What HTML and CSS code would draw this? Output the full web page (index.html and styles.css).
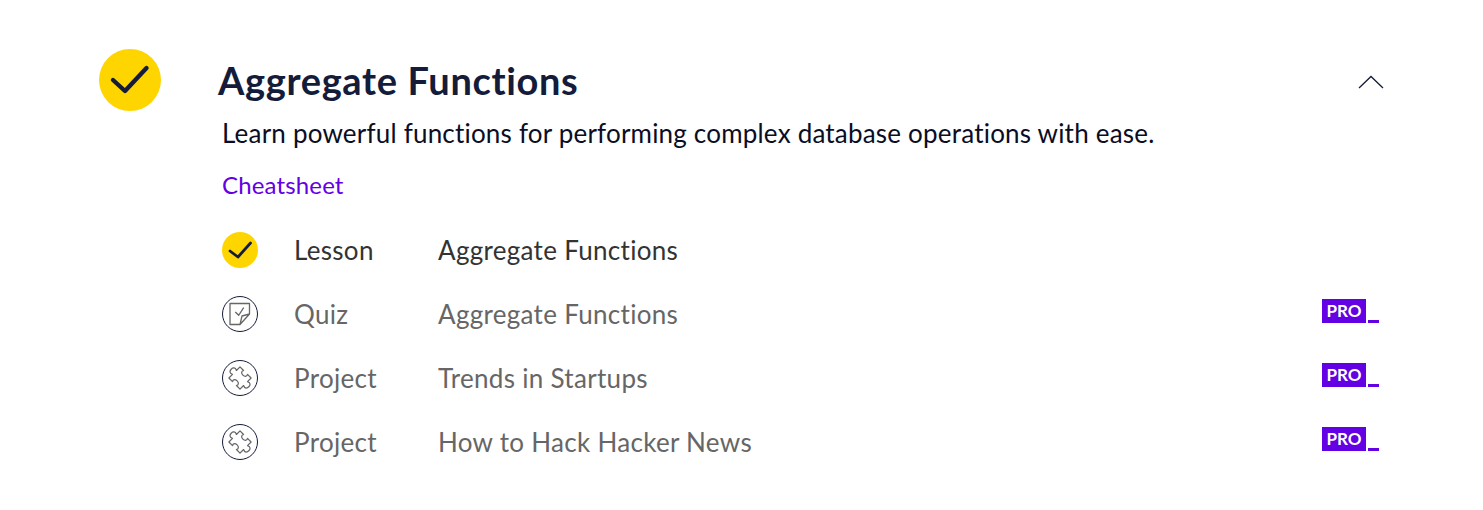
FILE: index.html
```html
<!DOCTYPE html>
<html lang="en">
<head>
    <meta charset="UTF-8">
    <title>Aggregate Functions</title>
    <link rel="stylesheet" href="styles.css">
</head>
<body>
    <svg class="defs" width="0" height="0">
        <defs>
            <path id="puzzle" d="M-7 -7 H-2.5 C-5.5 -12.5 5.5 -12.5 2.5 -7 H7 V-2.5 C2.5 -5 2.5 5 7 2.5 V7 H2.5 C5.5 12.5 -5.5 12.5 -2.5 7 H-7 V2.5 C-2.5 5 -2.5 -5 -7 -2.5 Z"/>
        </defs>
    </svg>
    <div class="module">
        <svg class="module-icon" viewBox="0 0 62 62">
            <circle cx="31" cy="31" r="31" fill="#ffd500"/>
            <path d="M14 31 L26 42 L47.5 19" fill="none" stroke="#141c3a" stroke-width="4.4" stroke-linecap="round" stroke-linejoin="round"/>
        </svg>
        <div class="module-body">
            <div class="module-head">
                <h2 class="title">Aggregate Functions</h2>
                <svg class="chevron" viewBox="0 0 26 14">
                    <path d="M1 13 L13 1.5 L25 13" fill="none" stroke="#141c3a" stroke-width="1.3"/>
                </svg>
            </div>
            <div class="module-content">
                <p class="desc">Learn powerful functions for performing complex database operations with ease.</p>
                <a class="sheet" href="#">Cheatsheet</a>
                <ul class="items">
                    <li class="item done">
                        <svg class="item-icon" viewBox="0 0 36 36">
                            <circle cx="18" cy="18" r="18" fill="#ffd500"/>
                            <path d="M8 19 L16 25 L28.5 11" fill="none" stroke="#141c3a" stroke-width="2.8" stroke-linecap="round" stroke-linejoin="round"/>
                        </svg>
                        <span class="kind">Lesson</span>
                        <span class="name">Aggregate Functions</span>
                    </li>
                    <li class="item">
                        <svg class="item-icon" viewBox="0 0 36 36">
                            <circle cx="18" cy="18" r="17.5" fill="none" stroke="#141c3a"/>
                            <path d="M8 7.5 H27.5 V18 L18 28.5 H8 Z M18 28.5 L20 20 L27.5 18" fill="none" stroke="#666" stroke-width="1.3" stroke-linejoin="round"/>
                            <path d="M13.3 16 L16.7 19.3 L21.7 11.7" fill="none" stroke="#666" stroke-width="1.3"/>
                        </svg>
                        <span class="kind">Quiz</span>
                        <span class="name">Aggregate Functions</span>
                        <span class="pro"><span class="pro-box">PRO</span><span class="pro-line"></span></span>
                    </li>
                    <li class="item">
                        <svg class="item-icon" viewBox="0 0 36 36">
                            <circle cx="18" cy="18" r="17.5" fill="none" stroke="#141c3a"/>
                            <use href="#puzzle" transform="translate(18 18) rotate(-45) scale(1.12)" fill="none" stroke="#666" stroke-width="1.1" stroke-linejoin="round"/>
                        </svg>
                        <span class="kind">Project</span>
                        <span class="name">Trends in Startups</span>
                        <span class="pro"><span class="pro-box">PRO</span><span class="pro-line"></span></span>
                    </li>
                    <li class="item">
                        <svg class="item-icon" viewBox="0 0 36 36">
                            <circle cx="18" cy="18" r="17.5" fill="none" stroke="#141c3a"/>
                            <use href="#puzzle" transform="translate(18 18) rotate(-45) scale(1.12)" fill="none" stroke="#666" stroke-width="1.1" stroke-linejoin="round"/>
                        </svg>
                        <span class="kind">Project</span>
                        <span class="name">How to Hack Hacker News</span>
                        <span class="pro"><span class="pro-box">PRO</span><span class="pro-line"></span></span>
                    </li>
                </ul>
            </div>
        </div>
    </div>
</body>
</html>
```

FILE: styles.css
```css
*{
    padding: 0;
    margin: 0;
    list-style: none;
}
body{
    background: #fff;
    font-family: "Lato", "Noto Sans", sans-serif;
    color: #141c3a;
}
.defs{
    display: block;
}
.module{
    display: flex;
    padding: 49px 99px 0 99px;
}
.module-icon{
    width: 62px;
    height: 62px;
    flex: none;
    margin-right: 57px;
}
.module-body{
    flex: 1;
}
.module-head{
    display: flex;
    justify-content: space-between;
    align-items: center;
    height: 62px;
}
.title{
    font-size: 38px;
    font-weight: 700;
    line-height: 62px;
    letter-spacing: 0.65px;
}
.chevron{
    width: 26px;
    height: 14px;
    margin-top: 4px;
}
.module-content{
    padding-left: 4px;
}
.desc{
    font-size: 26px;
    line-height: 34px;
    margin-top: 5px;
    letter-spacing: 0.2px;
    color: #0a0d24;
}
.sheet{
    display: block;
    font-size: 24px;
    line-height: 30px;
    margin-top: 20px;
    letter-spacing: 0.15px;
    color: #6400e4;
    text-decoration: none;
}
.items{
    margin-top: 18px;
}
.item{
    display: flex;
    align-items: center;
    height: 64px;
    font-size: 26px;
    letter-spacing: 0.3px;
    color: #666;
}
.item.done{
    color: #333;
}
.item-icon{
    width: 36px;
    height: 36px;
    flex: none;
    margin-right: 36px;
}
.kind{
    width: 144px;
    flex: none;
}
.name{
    flex: 1;
}
.pro{
    display: flex;
    align-items: flex-end;
    gap: 2px;
    margin-right: 5px;
    margin-bottom: 6px;
}
.pro-box{
    background: #6400e4;
    color: #fff;
    font-size: 17px;
    font-weight: 700;
    letter-spacing: 0;
    line-height: 24px;
    width: 44px;
    text-align: center;
}
.pro-line{
    width: 11px;
    height: 3px;
    background: #6400e4;
}
```
